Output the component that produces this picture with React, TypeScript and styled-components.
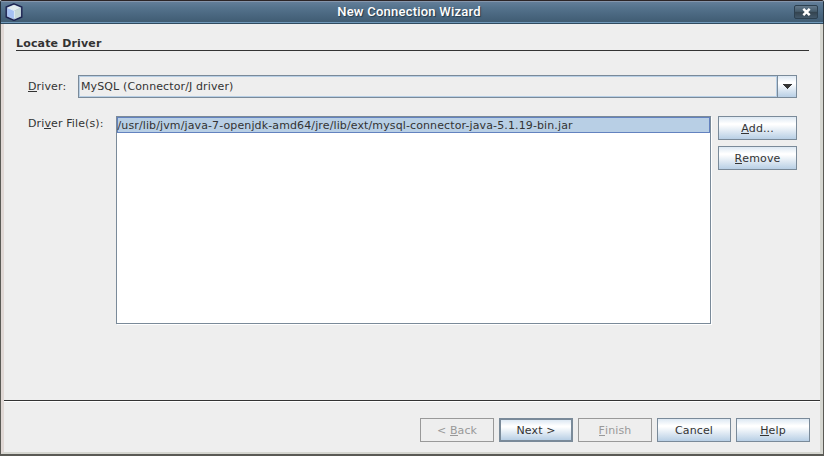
import React from "react";
import styled, { createGlobalStyle } from "styled-components";

const Global = createGlobalStyle`
  * { box-sizing: border-box; }
  body { margin: 0; background: #eee; overflow: hidden; }
`;

const Window = styled.div`
  width: 824px;
  height: 456px;
  display: flex;
  flex-direction: column;
  background: #eeeeee;
  color: #333333;
  font: 11px/14px "DejaVu Sans", sans-serif;
  letter-spacing: 0.12px;
  white-space: nowrap;
`;

const TitleBar = styled.header`
  height: 24px;
  flex: none;
  display: grid;
  grid-template-columns: 35px 1fr 41px;
  align-items: center;
  border-left: 1px solid #24333f;
  border-right: 1px solid #24333f;
  border-radius: 2px 2px 0 0;
  background: linear-gradient(#2b2426 0 1px, #8596ac 1px 2px, #637e99 2px, #54728c 8px, #405c73 22px, #7199ba 22px 23px, #304b60 23px);
`;

const Title = styled.h1`
  margin: 0;
  text-align: center;
  font: 500 13px/22px Roboto, sans-serif;
  letter-spacing: 0.23px;
  color: #ffffff;
  text-shadow: 1px 1px 1px #263b4b;
`;

const CloseButton = styled.button`
  width: 24px;
  height: 14px;
  margin: 0 0 0 12px;
  padding: 0;
  display: flex;
  align-items: center;
  justify-content: center;
  border: 1px solid #2c4050;
  border-radius: 2px;
  background: linear-gradient(#63788a, #465c6c 45%, #33434e 50%, #42586a);
`;

const Frame = styled.div`
  flex: 1;
  display: flex;
  flex-direction: column;
  border: solid #5a5a55;
  border-width: 0 1px 2px;
`;

const Bevel = styled.div`
  flex: 1;
  display: flex;
  flex-direction: column;
  border-style: solid;
  border-width: 0 3px 2px;
  border-color: #d8d8d3 #d5d6d0 #d5d6d0 #e0d8d5;
`;

const Content = styled.main`
  height: 376px;
  padding: 12px 11px 0 12px;
`;

const Heading = styled.h2`
  margin: 0;
  height: 15px;
  border-bottom: 1px solid #333333;
  font: bold 11px/16px "DejaVu Sans", sans-serif;
  letter-spacing: 0.16px;
`;

const Form = styled.div`
  display: grid;
  row-gap: 18px;
  padding: 24px 12px 0;
`;

const Row = styled.div<{ $columns: string }>`
  display: grid;
  grid-template-columns: ${(p) => p.$columns};
  align-items: start;
`;

const Label = styled.label<{ $top: number }>`
  padding-top: ${(p) => p.$top}px;
`;

const Key = styled.span`
  border-bottom: 1px solid currentColor;
  display: inline-block;
  height: 12px;
`;

const Combo = styled.div`
  height: 23px;
  display: flex;
  border: 1px solid #7a8a99;
`;

const ComboValue = styled.div`
  flex: 1;
  border: 1px solid #b8cfe5;
  padding: 3px 1px;
`;

const ComboArrow = styled.div`
  width: 19px;
  display: flex;
  align-items: center;
  justify-content: center;
  border-left: 1px solid #7a8a99;
  background: linear-gradient(#dde8f3, #ffffff 30%, #ffffff 35%, #b8cfe5);
`;

const FileList = styled.div`
  width: 595px;
  height: 208px;
  border: 1px solid #7a8a99;
  background: #ffffff;
  box-shadow: 1px 1px #ffffff;
`;

const FileItem = styled.div`
  height: 16px;
  border: 1px solid #6382bf;
  background: #b8cfe5;
  line-height: 15px;
  text-indent: -0.5px;
`;

const ButtonColumn = styled.div`
  display: grid;
  gap: 6px;
`;

const Button = styled.button<{ $primary?: boolean }>`
  width: 100%;
  height: 24px;
  padding: 1px 0 0;
  color: #333333;
  font: inherit;
  letter-spacing: inherit;
  border: ${(p) => (p.$primary ? 2 : 1)}px solid #7a8a99;
  border-radius: 0;
  background: linear-gradient(#dde8f3, #ffffff 30%, #ffffff 35%, #b8cfe5);
  &:disabled {
    color: #999999;
    border-color: #999999;
    background: #eeeeee;
  }
`;

const Footer = styled.footer`
  flex: 1;
  display: grid;
  grid-template-columns: repeat(5, 74px);
  justify-content: end;
  gap: 5px;
  padding: 17px 10px 0 0;
  border-top: 1px solid #333333;
  box-shadow: inset 0 1px #ffffff;
`;

const CubeIcon = () => (
  <svg width="18" height="18" viewBox="0 0 18 18">
    <path d="M9 .8 16.8 4v10L9 17.4 1.2 14V4Z" fill="#aebfd6" stroke="#1c2350" strokeWidth="1.4" />
    <path d="M2.4 4.8 9 2l6.6 2.8L9.6 7.6Z" fill="#e3ecee" />
    <path d="M2.4 5 9.4 7.8V16L2.4 13.2Z" fill="#a6c1f4" />
    <path d="M9.4 7.8 15.7 5v8.2L9.4 16Z" fill="#c7d8d8" />
    <path d="m3 5 6.4 2.7V15" fill="none" stroke="#e7f2fb" strokeWidth="0.8" />
  </svg>
);

const IconSlot = styled.div`
  display: flex;
  padding-left: 4px;
`;

export default function App() {
  return (
    <>
      <Global />
      <Window>
        <TitleBar>
          <IconSlot><CubeIcon /></IconSlot>
          <Title>New Connection Wizard</Title>
          <CloseButton aria-label="Close">
            <svg width="9" height="8" viewBox="0 0 9 8">
              <path d="m1.3.8 6.4 6.4m0-6.4L1.3 7.2" stroke="#fff" strokeWidth="2.4" />
            </svg>
          </CloseButton>
        </TitleBar>
        <Frame>
          <Bevel>
            <Content>
              <Heading>Locate Driver</Heading>
              <Form>
                <Row $columns="50px 719px">
                  <Label $top={5}><Key>D</Key>river:</Label>
                  <Combo>
                    <ComboValue>MySQL (Connector/J driver)</ComboValue>
                    <ComboArrow>
                      <svg width="10" height="5" viewBox="0 0 10 5" shapeRendering="crispEdges">
                        <path d="M0 0h10L5 5Z" fill="#333" />
                      </svg>
                    </ComboArrow>
                  </Combo>
                </Row>
                <Row $columns="88px 602px 79px">
                  <Label $top={1}>Dri<Key>v</Key>er File(s):</Label>
                  <FileList>
                    <FileItem>/usr/lib/jvm/java-7-openjdk-amd64/jre/lib/ext/mysql-connector-java-5.1.19-bin.jar</FileItem>
                  </FileList>
                  <ButtonColumn>
                    <Button><Key>A</Key>dd...</Button>
                    <Button><Key>R</Key>emove</Button>
                  </ButtonColumn>
                </Row>
              </Form>
            </Content>
            <Footer>
              <Button disabled>&lt; <Key>B</Key>ack</Button>
              <Button $primary>Next &gt;</Button>
              <Button disabled><Key>F</Key>inish</Button>
              <Button>Cancel</Button>
              <Button><Key>H</Key>elp</Button>
            </Footer>
          </Bevel>
        </Frame>
      </Window>
    </>
  );
}
